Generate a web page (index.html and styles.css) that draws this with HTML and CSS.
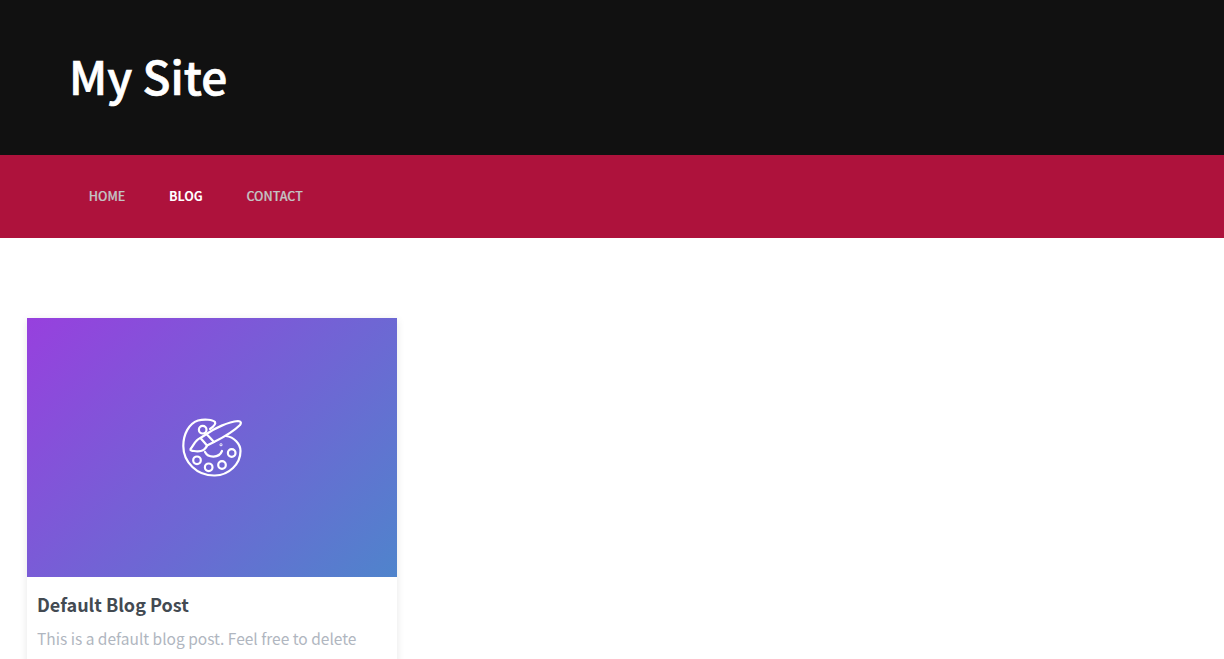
FILE: index.html
```html
<!DOCTYPE html>
<html lang="en">
<head>
  <meta charset="UTF-8" />
  <title>My Site</title>
  <link rel="stylesheet" href="styles.css">
</head>
<body>
  <header class="site-header">
    <h1 class="site-title">My Site</h1>
  </header>

  <nav class="site-nav">
    <ul>
      <li><a href="#">Home</a></li>
      <li><a href="#" class="active">Blog</a></li>
      <li><a href="#">Contact</a></li>
    </ul>
  </nav>

  <main class="posts">
    <article class="card">
      <div class="card-image">
        <svg class="palette" viewBox="0 0 60 60" fill="none" stroke="#fff" stroke-width="2.2" stroke-linecap="round" stroke-linejoin="round">
          <path d="M28 11C31 9 34 6 33 4C31 1.500 22 1 16 2.500C7 5.500 1.300 16 1.300 28C1.300 44 15 58 33 57.500C47 57 58.500 46 58.500 33C58.500 26 52 19 44 18" />
          <path d="M24.500 16C33 10 46 4 56 3C59 3 59.500 5 58 7C52 13 42 19 32 24Z" />
          <path d="M24.500 16L18.500 20L25 27.500L32 24" />
          <path d="M18.500 20C13 22 12 27 8.500 31C8 32.500 10 33 12 33C17 34 23 33 25 27.500" />
          <circle cx="20.700" cy="11.700" r="3.800" />
          <circle cx="49.700" cy="35" r="3.800" />
          <circle cx="15" cy="42.300" r="3.800" />
          <circle cx="26.700" cy="49.300" r="3.800" />
          <circle cx="40" cy="47" r="3.800" />
          <path d="M23 34C26 40 37 40.500 40 33" />
          <circle cx="39" cy="26.700" r="0.400" />
        </svg>
      </div>
      <div class="card-body">
        <h2 class="card-title">Default Blog Post</h2>
        <p class="card-text">This is a default blog post. Feel free to delete</p>
      </div>
    </article>
  </main>
</body>
</html>
```

FILE: styles.css
```css
* {
  margin: 0;
  padding: 0;
  box-sizing: border-box;
}

html, body {
  height: 659px;
  overflow: hidden;
}

body {
  font-family: "Noto Sans CJK JP", "Noto Sans", sans-serif;
  background-color: #fff;
  color: #333;
}

.site-header {
  background-color: #111;
  height: 155px;
  padding: 45px 69px 0;
}

.site-title {
  font-size: 46px;
  line-height: 60px;
  font-weight: 500;
  color: #fff;
  -webkit-text-stroke: 0.7px #fff;
}

.site-nav {
  background-color: #ae123c;
  height: 83px;
  padding: 0 67px 2px;
  display: flex;
  align-items: center;
}

.site-nav ul {
  list-style: none;
  display: flex;
}

.site-nav a {
  display: block;
  padding: 0 21.8px;
  color: #c4c4c4;
  font-size: 12.5px;
  line-height: 20px;
  font-weight: 500;
  text-transform: uppercase;
  text-decoration: none;
  -webkit-text-stroke: 0.2px #c4c4c4;
}

.site-nav a.active {
  color: #fff;
  font-weight: 700;
  -webkit-text-stroke: 0;
}

.posts {
  padding: 80px 27px 0;
}

.card {
  width: 370px;
  background-color: #fff;
  box-shadow: 0 2px 8px rgba(0, 0, 0, 0.1);
}

.card-image {
  height: 259px;
  background: linear-gradient(135deg, #9740de 0%, #4f84cc 100%);
  display: flex;
  align-items: center;
  justify-content: center;
}

.palette {
  width: 60px;
  height: 60px;
}

.card-body {
  padding: 14px 10px 30px;
}

.card-title {
  font-size: 18px;
  line-height: 26px;
  font-weight: 700;
  color: #434a52;
  margin-bottom: 9px;
}

.card-text {
  font-size: 15.5px;
  line-height: 24px;
  font-weight: 400;
  color: #b0b6c0;
}
```
